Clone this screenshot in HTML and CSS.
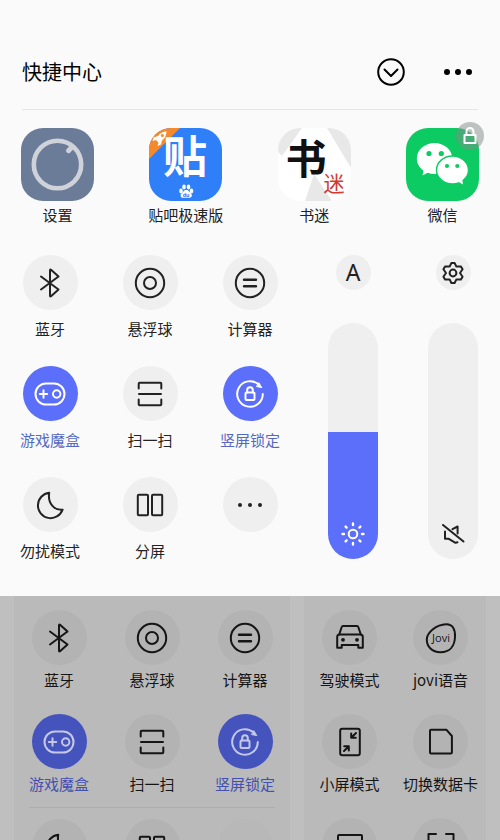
FILE: index.html
```
<!DOCTYPE html>
<html lang="zh-CN">
<head>
    <meta charset="UTF-8">
    <meta name="viewport" content="width=device-width, initial-scale=1.0">
    <title>快捷中心</title>
    <link rel="stylesheet" href="styles.css">
</head>
<body>

<!-- Icons shared by the sheet and the page behind it -->
<svg class="sprite" aria-hidden="true">
    <clipPath id="app-shape"><rect width="73" height="73" rx="22"/></clipPath>
    <symbol id="bluetooth" viewBox="-16 -16 32 32">
        <path d="M-9 -6.5L8.5 6.5L1 13.2Q0 13.8 0 12.5V-12.5Q0 -13.8 1 -13.2L8.5 -6.5L-9 6.5"/>
    </symbol>
    <symbol id="ball" viewBox="-16 -16 32 32">
        <circle r="14.2"/><circle r="6"/>
    </symbol>
    <symbol id="calc" viewBox="-16 -16 32 32">
        <circle r="14.2"/><path d="M-6 -3.3H6M-6 3.3H6" stroke-width="2.4"/>
    </symbol>
    <symbol id="gamepad" viewBox="-16 -16 32 32">
        <rect x="-14.5" y="-10.5" width="29" height="21" rx="10.5"/>
        <path d="M-10.2 0H-2.8M-6.5 -3.7V3.7"/><circle cx="6.7" r="3.7"/>
    </symbol>
    <symbol id="scan" viewBox="-16 -16 32 32">
        <path d="M-11.3 -5.5V-10.3Q-11.3 -11.3 -10.3 -11.3H10.3Q11.3 -11.3 11.3 -10.3V-5.5M-11 0H11M-11.3 5.5V10.3Q-11.3 11.3 -10.3 11.3H10.3Q11.3 11.3 11.3 10.3V5.5"/>
    </symbol>
    <symbol id="rotate-lock" viewBox="-16 -16 32 32">
        <path d="M12.8 0A12.8 12.8 0 1 1 8.6 -9.5"/>
        <path d="M9 -11L11.8 -6.4L6.8 -7.4Z" fill="currentColor" stroke-width="1"/>
        <rect x="-4.5" y="-1.5" width="9" height="7.5" rx="1"/>
        <path d="M-2.8 -1.5V-4A2.8 2.8 0 0 1 2.8 -4V-1.5"/>
    </symbol>
    <symbol id="moon" viewBox="-16 -16 32 32">
        <path d="M-0.8 -12.2A12.7 12.7 0 1 0 12.6 4.7C4.5 5.5 -2.5 -1.5 -0.8 -12.2Z"/>
    </symbol>
    <symbol id="split" viewBox="-16 -16 32 32">
        <rect x="-12.2" y="-10.2" width="10.2" height="20.4" rx="1"/>
        <rect x="2" y="-10.2" width="10.2" height="20.4" rx="1"/>
    </symbol>
    <symbol id="dots" viewBox="-16 -16 32 32">
        <g fill="currentColor" stroke="none"><circle cx="-10" r="2"/><circle r="2"/><circle cx="10" r="2"/></g>
    </symbol>
    <symbol id="gear" viewBox="-16 -16 32 32">
        <path d="M-1.6 -10H1.6L3.4 -6.4L7.8 -6.6L9.6 -3.8L7 0L9.6 3.8L7.8 6.6L3.4 6.4L1.6 10H-1.6L-3.4 6.4L-7.8 6.6L-9.6 3.8L-7 0L-9.6 -3.8L-7.8 -6.6L-3.4 -6.4Z"/>
        <circle r="3.4"/>
    </symbol>
    <symbol id="sun" viewBox="-16 -16 32 32">
        <circle r="4.3"/>
        <path d="M0 -9V-10.5M0 9V10.5M-9 0H-10.5M9 0H10.5M-6.4 -6.4L-7.4 -7.4M6.4 -6.4L7.4 -7.4M-6.4 6.4L-7.4 7.4M6.4 6.4L7.4 7.4" stroke-width="2.4"/>
    </symbol>
    <symbol id="mute" viewBox="-16 -16 32 32">
        <path d="M-10 -9L10.5 7.5M-0.5 -4.8L4.6 -7.5V-0.5M-8 -2.5V4.8H-4.2L2.5 8.8L4.5 8.2"/>
    </symbol>
    <symbol id="car" viewBox="-16 -16 32 32">
        <path d="M-10.8 -3.5L-8.3 -11Q-8 -12 -7 -12H7Q8 -12 8.3 -11L10.8 -3.5"/>
        <path d="M-10.8 -3.5H10.8Q12.8 -3.2 12.8 -1V9.8H8.3V7H-8.3V9.8H-12.8V-1Q-12.8 -3.2 -10.8 -3.5Z"/>
        <g fill="currentColor" stroke="none"><circle cx="-7" cy="1.8" r="1.9"/><circle cx="7" cy="1.8" r="1.9"/></g>
    </symbol>
    <symbol id="shrink" viewBox="-16 -16 32 32">
        <rect x="-9.8" y="-13.2" width="19.6" height="26.4" rx="2"/>
        <path d="M6 -9L1.5 -4.5M1.2 -8.5V-4.2H5.8M-6 9L-1.5 4.5M-5.8 4.2H-1.2V8.5"/>
    </symbol>
    <symbol id="sim" viewBox="-16 -16 32 32">
        <path d="M-10 -12.3H5.3L10.9 -6V10.5Q10.9 11.5 9.9 11.5H-10Q-11 11.5 -11 10.5V-11.3Q-11 -12.3 -10 -12.3Z"/>
    </symbol>
    <symbol id="screen" viewBox="-16 -16 32 32">
        <rect x="-12" y="-11" width="24" height="18" rx="1"/>
    </symbol>
    <symbol id="corners" viewBox="-16 -16 32 32">
        <path d="M-12.5 -5V-12H-5M12.5 -5V-12H5M-12.5 5V12H-5M12.5 5V12H5"/>
    </symbol>
</svg>

<main class="sheet">
    <header class="header">
        <h1>快捷中心</h1>
        <button class="header-btn" aria-label="收起">
            <svg width="28" height="28" viewBox="0 0 28 28"><circle cx="14" cy="14" r="12.8"/><path d="M7.5 11.5L14 18L20.5 11.5"/></svg>
        </button>
        <button class="header-btn" aria-label="更多">
            <svg width="30" height="28" viewBox="0 0 30 28"><g fill="currentColor" stroke="none"><circle cx="4" cy="14" r="3"/><circle cx="15" cy="14" r="3"/><circle cx="26" cy="14" r="3"/></g></svg>
        </button>
    </header>

    <nav class="apps">
        <button class="app">
            <svg class="app-icon" viewBox="0 0 73 73">
                <rect width="73" height="73" rx="22" fill="#6b7c98"/>
                <circle cx="36.5" cy="36.5" r="23.7" fill="none" stroke="#d0d2da" stroke-width="4.6"/>
                <path d="M51 19L47.5 22.7" stroke="#d0d2da" stroke-width="5" stroke-linecap="round"/>
            </svg>
            <span>设置</span>
        </button>
        <button class="app">
            <svg class="app-icon" viewBox="0 0 73 73">
                <g clip-path="url(#app-shape)">
                    <rect width="73" height="73" fill="#2f80f8"/>
                    <path d="M0 0H31L0 31Z" fill="#f58a2c"/>
                </g>
                <g fill="#fff">
                    <path d="M17.5 3.5Q12 3.5 9 8L4.5 9.5L3.5 13L7 12L9.5 14.5L8.5 18L12 16.5L13 12.5Q17.5 9 17.5 3.5Z"/>
                    <circle cx="13.3" cy="7.6" r="1.5" fill="#f58a2c"/>
                    <text class="logo-tie" x="36" y="45" text-anchor="middle">贴</text>
                    <ellipse cx="32" cy="63" rx="1.8" ry="2.4"/>
                    <ellipse cx="35" cy="59" rx="1.8" ry="2.4"/>
                    <ellipse cx="39.5" cy="59" rx="1.8" ry="2.4"/>
                    <ellipse cx="42.5" cy="63" rx="1.8" ry="2.4"/>
                    <path d="M37.2 62C40 62 40 64 42 65.5C44 68 42 70 40 69.8H34.5C32 70 30.5 67.5 32.5 65.5C34.5 64 34.5 62 37.2 62Z"/>
                </g>
                <text class="logo-du" x="37" y="69" text-anchor="middle">du</text>
            </svg>
            <span>贴吧极速版</span>
        </button>
        <button class="app">
            <svg class="app-icon" viewBox="0 0 73 73">
                <g clip-path="url(#app-shape)">
                    <rect width="73" height="73" fill="#fff"/>
                    <path d="M0 0H24L4 28L0 24ZM49 0H73V40ZM36 46L54 73H27Z" fill="#e8e8e8"/>
                </g>
                <text class="logo-shu" x="28" y="46" text-anchor="middle">书</text>
                <text class="logo-mi" x="56" y="63" text-anchor="middle">迷</text>
            </svg>
            <span>书迷</span>
        </button>
        <button class="app">
            <svg class="app-icon" viewBox="0 0 73 73">
                <rect width="73" height="73" rx="22" fill="#0ccb62"/>
                <g fill="#fff">
                    <ellipse cx="28.5" cy="30.5" rx="17.7" ry="15.5"/>
                    <path d="M18 40L16.5 47.5L25 43Z"/>
                    <ellipse cx="46.5" cy="42" rx="16" ry="14" stroke="#0ccb62" stroke-width="1.4"/>
                    <path d="M51 53L57 56.5L56 50Z"/>
                </g>
                <g fill="#0ccb62"><circle cx="23" cy="25.5" r="2.6"/><circle cx="35.3" cy="25.5" r="2.6"/><circle cx="41" cy="38" r="2.1"/><circle cx="51.3" cy="38" r="2.1"/></g>
            </svg>
            <svg class="badge" viewBox="0 0 28 28">
                <rect x="8.5" y="13" width="11" height="8" fill="none" stroke="#fff" stroke-width="2"/>
                <path d="M10.5 13V9.5A3.5 3.5 0 0 1 17.5 9.5V13" fill="none" stroke="#fff" stroke-width="2"/>
            </svg>
            <span>微信</span>
        </button>
    </nav>

    <section class="controls">
        <div class="tiles">
            <button class="tile"><span class="dot"><svg><use href="#bluetooth"/></svg></span>蓝牙</button>
            <button class="tile"><span class="dot"><svg><use href="#ball"/></svg></span>悬浮球</button>
            <button class="tile"><span class="dot"><svg><use href="#calc"/></svg></span>计算器</button>
            <button class="tile on"><span class="dot"><svg><use href="#gamepad"/></svg></span>游戏魔盒</button>
            <button class="tile"><span class="dot"><svg><use href="#scan"/></svg></span>扫一扫</button>
            <button class="tile on"><span class="dot"><svg><use href="#rotate-lock"/></svg></span>竖屏锁定</button>
            <button class="tile"><span class="dot"><svg><use href="#moon"/></svg></span>勿扰模式</button>
            <button class="tile"><span class="dot"><svg><use href="#split"/></svg></span>分屏</button>
            <button class="tile" aria-label="更多"><span class="dot"><svg><use href="#dots"/></svg></span></button>
        </div>
        <div class="sliders">
            <div class="slider">
                <button class="mini" aria-label="自动亮度">A</button>
                <label class="track">
                    <input type="range" min="0" max="100" value="54" aria-label="亮度" style="--level: 54%">
                    <svg class="light"><use href="#sun"/></svg>
                </label>
            </div>
            <div class="slider">
                <button class="mini" aria-label="声音设置"><svg><use href="#gear"/></svg></button>
                <label class="track">
                    <input type="range" min="0" max="100" value="0" aria-label="音量" style="--level: 0%">
                    <svg><use href="#mute"/></svg>
                </label>
            </div>
        </div>
    </section>
</main>

<section class="behind">
    <div class="card card-left">
        <div class="card-row">
            <button class="tile"><span class="dot"><svg><use href="#bluetooth"/></svg></span>蓝牙</button>
            <button class="tile"><span class="dot"><svg><use href="#ball"/></svg></span>悬浮球</button>
            <button class="tile"><span class="dot"><svg><use href="#calc"/></svg></span>计算器</button>
        </div>
        <div class="card-row">
            <button class="tile on"><span class="dot"><svg><use href="#gamepad"/></svg></span>游戏魔盒</button>
            <button class="tile"><span class="dot"><svg><use href="#scan"/></svg></span>扫一扫</button>
            <button class="tile on"><span class="dot"><svg><use href="#rotate-lock"/></svg></span>竖屏锁定</button>
        </div>
        <hr>
        <div class="card-row">
            <button class="tile" aria-label="勿扰模式"><span class="dot"><svg><use href="#moon"/></svg></span></button>
            <button class="tile" aria-label="分屏"><span class="dot"><svg><use href="#split"/></svg></span></button>
            <button class="tile faint" aria-label="更多"><span class="dot"></span></button>
        </div>
    </div>
    <div class="card card-right">
        <button class="tile"><span class="dot"><svg><use href="#car"/></svg></span>驾驶模式</button>
        <button class="tile">
            <span class="dot">
                <svg viewBox="-16 -16 32 32">
                    <path d="M5 -13.8C11.5 -14 14.3 -9 14 -1.5C13.8 8.5 8.5 14.2 -0.5 14.2C-9 14.2 -14.3 8.5 -14.2 1.5C-14 -5.5 -4.5 -13.5 5 -13.8Z"/>
                    <text class="logo-jovi" x="0" y="4" text-anchor="middle">Jovi</text>
                </svg>
            </span>jovi语音
        </button>
        <button class="tile"><span class="dot"><svg><use href="#shrink"/></svg></span>小屏模式</button>
        <button class="tile"><span class="dot"><svg><use href="#sim"/></svg></span>切换数据卡</button>
        <button class="tile" aria-label="投屏"><span class="dot"><svg><use href="#screen"/></svg></span></button>
        <button class="tile" aria-label="截屏"><span class="dot"><svg><use href="#corners"/></svg></span></button>
    </div>
</section>

<script>
    // Keep the filled part of each slider in step with its value
    document.querySelectorAll('input[type="range"]').forEach(input => {
        input.addEventListener('input', () => {
            input.style.setProperty('--level', input.value + '%');
        });
    });
</script>

</body>
</html>
```
FILE: styles.css
```
* {
    box-sizing: border-box;
}
body {
    margin: 0;
    height: 100vh;
    display: flex;
    flex-direction: column;
    overflow: hidden;
    background: #bfbfbf;
    color: #222;
    font-family: "Noto Sans CJK SC", sans-serif;
    font-size: 15px;
}
button {
    padding: 0;
    border: none;
    background: none;
    color: inherit;
    font: inherit;
    cursor: pointer;
}
svg {
    display: block;
    fill: none;
    stroke: currentColor;
    stroke-width: 2;
    stroke-linecap: round;
    stroke-linejoin: round;
}
svg text {
    stroke: none;
}
.sprite {
    position: absolute;
    width: 0;
    height: 0;
}

/* Sheet */
.sheet {
    flex: none;
    padding-bottom: 35px;
    background: #fafafa;
}
.header {
    display: flex;
    align-items: center;
    gap: 38px;
    margin: 0 22px;
    padding: 56px 5px 21px 0;
    border-bottom: 1px solid #e6e6e6;
    color: #000;
}
.header h1 {
    flex: 1;
    margin: 0;
    font-size: 20px;
    line-height: 32px;
    font-weight: 400;
}
.apps {
    display: flex;
    justify-content: space-between;
    padding: 18px 21px 0;
}
.app {
    position: relative;
    display: flex;
    flex-direction: column;
    align-items: center;
    width: 73px;
    line-height: 28px;
    white-space: nowrap;
}
.app-icon {
    width: 73px;
    height: 73px;
    overflow: visible;
    stroke: none;
}
.badge {
    position: absolute;
    top: -6px;
    right: -5px;
    width: 28px;
    height: 28px;
    border-radius: 50%;
    background: rgba(130, 140, 135, 0.5);
}
.logo-tie {
    fill: #fff;
    font-size: 44px;
    font-weight: 700;
}
.logo-du {
    fill: #2f80f8;
    font-family: Roboto, sans-serif;
    font-size: 6px;
    font-weight: 700;
}
.logo-shu {
    fill: #111;
    font-size: 41px;
    font-weight: 700;
}
.logo-mi {
    fill: #d23a2e;
    font-size: 21px;
}
.logo-jovi {
    fill: currentColor;
    font-family: "Open Sans", sans-serif;
    font-size: 11px;
}

/* Round shortcut buttons */
.tile {
    display: flex;
    flex-direction: column;
    align-items: center;
    gap: 9px;
    line-height: 20px;
    white-space: nowrap;
}
.dot {
    display: flex;
    align-items: center;
    justify-content: center;
    width: 55px;
    height: 55px;
    border-radius: 50%;
    background: #efefef;
}
.dot svg, .mini svg, .track svg {
    width: 32px;
    height: 32px;
}
.dot svg {
    overflow: visible;
}
.tile.on {
    color: #5468c4;
}
.tile.on .dot {
    background: #5b6ffb;
    color: #fff;
}
.controls {
    display: grid;
    grid-template-columns: 3fr 2fr;
    padding-top: 26px;
}
.tiles {
    display: grid;
    grid-template-columns: repeat(3, 1fr);
    gap: 27px 0;
}

/* Sliders */
.sliders {
    display: flex;
    justify-content: flex-end;
    gap: 50px;
    padding-right: 22px;
}
.slider {
    display: flex;
    flex-direction: column;
    align-items: center;
    gap: 33px;
}
.mini {
    display: flex;
    align-items: center;
    justify-content: center;
    width: 35px;
    height: 35px;
    border-radius: 50%;
    background: #efefef;
    font-family: "Noto Sans", sans-serif;
    font-size: 23px;
    line-height: 35px;
}
.mini svg {
    flex: none;
}
.track {
    position: relative;
}
.track input {
    appearance: none;
    display: block;
    width: 50px;
    height: 236px;
    margin: 0;
    border-radius: 25px;
    background: linear-gradient(to top, #5b6ffb var(--level), #efefef var(--level));
    writing-mode: vertical-lr;
    direction: rtl;
}
.track input::-webkit-slider-thumb {
    appearance: none;
    width: 50px;
    height: 1px;
    background: transparent;
}
.track svg {
    position: absolute;
    left: 9px;
    bottom: 9px;
    pointer-events: none;
}
.track .light {
    color: #fff;
}

/* Dimmed page under the sheet */
.behind {
    flex: 1;
    min-height: 0;
    display: grid;
    grid-template-columns: 276fr 182fr;
    gap: 14px;
    padding: 0 14px;
    overflow: hidden;
    color: #151515;
}
.card {
    padding-top: 14px;
    background: #bababa;
}
.card-left {
    padding-left: 15px;
    padding-right: 15px;
}
.card-right {
    display: grid;
    grid-template-columns: repeat(2, 1fr);
    align-content: start;
    gap: 24px 0;
}
.card-row {
    display: flex;
    justify-content: space-between;
}
.card-row + .card-row {
    margin-top: 24px;
}
.card hr {
    margin: 13px 0 11px;
    border: none;
    border-top: 1px solid #adadad;
}
.behind .tile {
    gap: 5px;
}
.card-row .tile {
    width: 60px;
}
.behind .dot {
    background: #b3b3b3;
}
.behind .tile.on {
    color: #4350b0;
}
.behind .tile.on .dot {
    background: #4553bd;
    color: #c4c8e6;
}
.behind .faint .dot {
    background: #b8b8b8;
}
```
